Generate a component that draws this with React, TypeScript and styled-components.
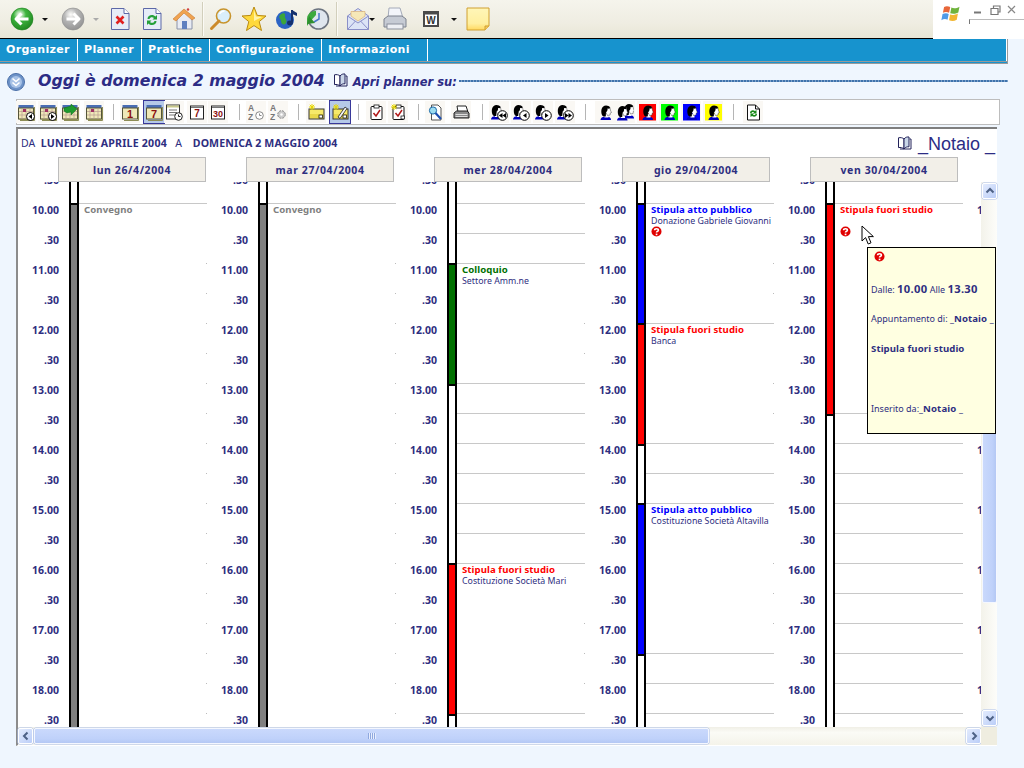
import React from 'react';
import styled, { createGlobalStyle } from 'styled-components';

const NAVY = '#2E2E80';
const UI = '"Noto Sans", "Liberation Sans", sans-serif';
const WIDE = '"DejaVu Sans", "Liberation Sans", sans-serif';

const Global = createGlobalStyle`
  html, body { margin: 0; padding: 0; background: #EFF6FE; }
  * { box-sizing: border-box; }
`;

const Root = styled.div`
  position: relative; width: 1024px; height: 768px; overflow: hidden;
  background: #EFF6FE; font-family: ${UI}; color: ${NAVY};
`;

/* ---------- browser bar ---------- */
const TopBar = styled.div`
  height: 39px; display: flex; align-items: stretch;
`;
const BrowserTools = styled.div`
  flex: 1; display: flex; align-items: center; border-bottom: 1px solid #000;
  background: linear-gradient(#F5F4EC, #EFEDE2 60%, #E8E6D6);
`;
const ToolSlot = styled.div<{ $ml: number; $w: number }>`
  margin-left: ${p => p.$ml}px; width: ${p => p.$w}px; height: 26px;
  display: flex; align-items: center; justify-content: center; flex: none;
`;
const ToolRule = styled.div`
  width: 1px; height: 34px; background: #D2CFBC; box-shadow: 1px 0 0 #FBFAF5; flex: none;
`;
const Caret = styled.div<{ $dim?: boolean }>`
  width: 0; height: 0; border: 3px solid transparent; border-bottom: 0;
  border-top: 3px solid ${p => (p.$dim ? '#AAA' : '#111')};
`;
const BrandBox = styled.div`
  width: 91px; background: #fff; position: relative; display: flex; padding: 2px 0 0 8px; gap: 8px;
`;
const WinButtons = styled.div`
  display: flex; flex-direction: column; gap: 4px; padding-top: 3px; width: 56px;
`;
const WinRow = styled.div`
  display: flex; gap: 8px; padding-left: 5px; align-items: center; height: 10px;
`;
const Slider = styled.div`
  height: 5px; border-left: 1px solid #777; border-top: 1px solid #BBB;
`;

/* ---------- menu ---------- */
const MenuBar = styled.nav`
  height: 25px; width: 1008px; display: flex; background: #1793CE;
  border-right: 1px solid #9A9A9A; border-bottom: 3px double #9A9A9A;
  box-shadow: inset -1px 0 0 #fff;
`;
const MenuItem = styled.div<{ $w: number }>`
  width: ${p => p.$w}px; border-right: 1px solid #fff; padding-left: 6px;
  color: #fff; font: bold 11px/22px ${WIDE}; letter-spacing: 0.32px; white-space: nowrap;
`;

/* ---------- title ---------- */
const TitleRow = styled.div`
  height: 35px; display: flex; align-items: center; padding: 0 16px 2px 7px; width: 1024px;
`;
const TitleBadge = styled.div`
  width: 18px; height: 18px; flex: none; margin: 2px 13px 0 0;
`;
const Title = styled.h1`
  margin: 0; font: italic bold 15.8px/22px ${WIDE}; color: #2C2C85; white-space: nowrap;
`;
const BookWrap = styled.span<{ $ml: number }>`
  margin-left: ${p => p.$ml}px; display: inline-flex; flex: none;
`;
const SubTitle = styled.span`
  margin: 2px 0 0 5px; font: italic bold 11.5px/16px ${WIDE}; color: #2C2C85; white-space: nowrap;
`;
const TitleRule = styled.div`
  flex: 1; margin: 0 0 0 2px; height: 2px; align-self: center;
  background: repeating-linear-gradient(90deg, #3F73AC 0 2px, #7FA3CB 2px 3px);
`;

/* ---------- app toolbar ---------- */
const AppTools = styled.div`
  margin-left: 16px; width: 984px; height: 26px; display: flex; align-items: center;
  background: #fff; border: 1px solid #BDBDBD;
`;
const AppCell = styled.div<{ $ml: number; $on?: boolean }>`
  margin-left: ${p => p.$ml}px; flex: none; display: flex; align-items: center; justify-content: center;
  width: ${p => (p.$on ? 22 : 20)}px; height: ${p => (p.$on ? 24 : 22)}px;
  background: ${p => (p.$on ? '#B5C9E8' : '#FAF8F4')};
  border: ${p => (p.$on ? '1px solid #38389A' : '0')};
`;
const AppRule = styled.div<{ $ml: number }>`
  margin-left: ${p => p.$ml}px; flex: none; width: 1px; height: 16px; background: #B5B5B5;
`;

/* ---------- planner panel ---------- */
const Panel = styled.section`
  margin: 2px 0 0 16px; width: 981px; height: 619px; background: #fff;
  border-top: 2px solid #7E7E7E; border-left: 2px solid #8C8C8C; border-bottom: 1px solid #fff;
  display: flex; flex-direction: column;
`;
const RangeRow = styled.div`
  height: 28px; display: flex; align-items: center; justify-content: space-between;
  padding: 0 2px 0 3px;
`;
const Range = styled.div`
  font: 10.5px/14px ${UI}; color: ${NAVY}; white-space: pre;
  b { font-weight: 700; font-size: 10.6px; letter-spacing: 0.1px; }
`;
const RangeFrom = styled.b`
  && { margin-left: 0; letter-spacing: 0.22px; }
`;
const Owner = styled.div`
  display: flex; align-items: center; gap: 6px; font: 18px/22px "Liberation Sans", sans-serif;
  color: #2C2C85; margin-top: 1px;
`;
const DayHeads = styled.div`
  height: 25px; display: flex; gap: 40px; padding-left: 40px; flex: none; overflow: hidden;
`;
const DayHead = styled.div`
  width: 148px; height: 25px; flex: none; background: #F2EFE8; border: 1px solid #BDBDBD;
  text-align: center; font: bold 10.5px/24px ${UI}; color: ${NAVY}; letter-spacing: 0.6px;
`;
const Frame = styled.div`
  flex: 1; display: grid; grid-template-columns: 963px 16px; grid-template-rows: 545px 18px;
`;
const Viewport = styled.div`
  overflow: hidden; display: flex; align-items: flex-start; width: 963px;
`;
const Day = styled.div`
  flex: none; width: 189px; margin-top: -9px; display: flex;
`;
const Hours = styled.div`
  width: 51px; flex: none; display: flex; flex-direction: column;
`;
const Hour = styled.div`
  height: 30px; padding: 0 10px 0 0; text-align: right;
  font: bold 10.5px/15px ${UI}; color: ${NAVY};
`;
const Bar = styled.div`
  width: 10px; flex: none; height: 600px; background: #fff;
  border-left: 2px solid #000; border-right: 2px solid #000;
  display: flex; flex-direction: column;
`;
const BarGap = styled.div<{ $slots: number }>`
  height: ${p => p.$slots * 30}px; flex: none;
`;
const BarFill = styled.div<{ $slots: number; $color: string }>`
  height: ${p => p.$slots * 30 + 3}px; margin-bottom: -3px; flex: none; background: ${p => p.$color};
  border-top: 2px solid #000; border-bottom: 2px solid #000; position: relative;
`;
const Slots = styled.div`
  width: 128px; flex: none; display: flex; flex-direction: column;
`;
const Slot = styled.div<{ $lined?: boolean }>`
  height: 30px; flex: none; border-top: 1px solid ${p => (p.$lined ? '#C8C8C8' : 'transparent')};
`;
const EventBlock = styled.div<{ $span: number }>`
  height: ${p => p.$span * 30}px; flex: none; border-top: 1px solid #C8C8C8; padding: 0 0 0 5px;
  background: repeating-linear-gradient(#BBB 0 1px, transparent 1px 30px) right 59px / 1px 100% no-repeat;
  overflow: hidden;
`;
const EventTitle = styled.div<{ $color: string }>`
  font: bold 9.6px/12px ${UI}; color: ${p => p.$color}; white-space: nowrap; letter-spacing: 0.08px;
`;
const EventSub = styled.div`
  font: 8.8px/11px ${UI}; color: ${NAVY}; white-space: nowrap; min-height: 11px;
`;
const AskMark = styled.div`
  height: 11px; margin-top: -1px; display: flex;
`;

/* ---------- scrollbars ---------- */
const VScroll = styled.div`
  display: flex; flex-direction: column; background: linear-gradient(90deg, #F3F2EA, #FDFDFA);
  padding: 1px 0 1px 1px;
`;
const HScroll = styled.div`
  display: flex; align-items: center; background: linear-gradient(#F0EFE6, #FBFBF6 30%, #F4F3EA);
  padding-left: 0;
`;
const ScrollCorner = styled.div`
  background: #EFEDE0;
`;
const ScrollBtn = styled.div`
  width: 15px; height: 16px; flex: none; background: linear-gradient(135deg, #E3EBFD, #BBCEF8);
  border: 1px solid #fff; border-radius: 2px; box-shadow: 0 0 0 .5px #A9BEEA;
  display: flex; align-items: center; justify-content: center;
`;
const HThumb = styled.div`
  width: 675px; height: 16px; margin-left: 1px; flex: none;
  background: linear-gradient(#CAD9FC, #BFD1FA 70%, #B4C8F4); border: 1px solid #F4F7FF; border-radius: 2px;
  box-shadow: 0 0 0 .5px #A9BEEA; display: flex; align-items: center; justify-content: center;
`;
const VTrack = styled.div`
  flex: 1; padding-top: 64px;
`;
const VThumb = styled.div`
  width: 15px; height: 340px;
  background: linear-gradient(90deg, #CAD9FC, #BFD1FA 70%, #B4C8F4); border-radius: 2px;
  border: 1px solid #F4F7FF;
`;
const Grip = styled.div`
  width: 8px; height: 6px;
  background: repeating-linear-gradient(90deg, #8FA8DE 0 1px, #E8EEFE 1px 2px);
`;
const HSpacer = styled.div`
  flex: 1;
`;

/* ---------- tooltip ---------- */
const Tip = styled.aside`
  position: absolute; left: 867px; top: 247px; width: 129px; height: 187px;
  background: #FFFFE1; border: 1px solid #000; padding: 3px 0 0 3px; overflow: hidden;
  font: 9px/15px ${UI}; color: ${NAVY}; white-space: nowrap;
`;
const TipIcon = styled.div`
  height: 11px; padding-left: 3px; display: flex; margin-bottom: 19px;
`;
const TipLine = styled.div<{ $gap?: number }>`
  height: 15px; margin-bottom: ${p => p.$gap ?? 15}px;
  b { font-size: 9.6px; letter-spacing: 0.1px; }
`;
const TipTime = styled.b`
  && { font-size: 11.2px; letter-spacing: 0.3px; }
`;
const Cursor = styled.svg`
  position: absolute; left: 861px; top: 225px;
`;

/* ---------- icons ---------- */
const Ask = () => (
  <svg width="11" height="11" viewBox="0 0 11 11">
    <circle cx="5.5" cy="5.5" r="5" fill="#E00000" />
    <path d="M3.6 4.2C3.6 2.2 7.4 2.2 7.4 4.2C7.4 5.4 5.5 5.2 5.5 6.6" fill="none" stroke="#fff" strokeWidth="1.6" />
    <rect x="4.7" y="7.6" width="1.7" height="1.6" fill="#fff" />
  </svg>
);
const Book = ({ size = 15 }: { size?: number }) => (
  <svg width={size} height={size} viewBox="0 0 15 15">
    <path d="M7 3C5.5 1.6 3.5 1.4 1.5 1.8V11.6C3.5 11.2 5.5 11.6 7 13Z" fill="#fff" stroke="#22225A" />
    <path d="M7 3C8.5 1 10.5 .8 12 1V10.8C10.5 10.6 8.5 11 7 13Z" fill="#C9D6E8" stroke="#22225A" />
    <path d="M12.5 3H14V13H3" fill="none" stroke="#22225A" />
  </svg>
);
const NavCircle = ({ color, dark, flip }: { color: string; dark: string; flip?: boolean }) => (
  <svg width="24" height="24" viewBox="0 0 24 24">
    <defs>
      <radialGradient id={`g${dark.slice(1)}`} cx=".4" cy=".3" r=".8">
        <stop offset="0" stopColor="#fff" stopOpacity=".8" />
        <stop offset=".35" stopColor={color} />
        <stop offset="1" stopColor={dark} />
      </radialGradient>
    </defs>
    <circle cx="12" cy="12" r="11" fill={`url(#g${dark.slice(1)})`} stroke={dark} strokeWidth=".6" />
    <path d={flip ? 'M5.5 12H17M12.5 6.5L18 12L12.5 17.5' : 'M18.5 12H7M11.5 6.5L6 12L11.5 17.5'} fill="none" stroke="#fff" strokeWidth="3" strokeLinejoin="round" />
  </svg>
);
const PageBase = ({ children }: { children: React.ReactNode }) => (
  <svg width="22" height="24" viewBox="0 0 22 24">
    <path d="M2.5 1.5H15L20 6.5V22.5H2.5Z" fill="#E6ECF8" stroke="#5C68A8" />
    <path d="M15 1.5V6.5H20" fill="#fff" stroke="#5C68A8" />
    {children}
  </svg>
);
const Home = () => (
  <svg width="24" height="24" viewBox="0 0 24 24">
    <path d="M5 11V22H20V11L12 4Z" fill="#E8EBF3" stroke="#8A92A8" />
    <path d="M1 12L12 2L23 11L20 13L12 6L4 14Z" fill="#F0A350" stroke="#C87830" strokeWidth=".6" />
    <rect x="10" y="14" width="5" height="8" fill="#5E7FC0" />
    <circle cx="16" cy="2.5" r="1.2" fill="#D04040" />
  </svg>
);
const Search = () => (
  <svg width="24" height="24" viewBox="0 0 24 24">
    <circle cx="14.5" cy="9" r="7" fill="#D9EEFB" stroke="#C8942C" strokeWidth="1.6" />
    <path d="M10 14L2.5 21.5" stroke="#CC8A2A" strokeWidth="3" strokeLinecap="round" />
    <path d="M10.5 7C11.5 5 13.5 4 15.5 4" stroke="#fff" strokeWidth="1.5" fill="none" />
  </svg>
);
const Star = () => (
  <svg width="26" height="26" viewBox="0 0 26 26">
    <path d="M13 1L16.3 9.4L25 10L18.2 15.6L20.5 24.5L13 19.6L5.5 24.5L7.8 15.6L1 10L9.7 9.4Z" fill="#FFD93A" stroke="#B98A12" />
    <path d="M13 4L15 10.5L21 11L13 15Z" fill="#FFF3A8" />
  </svg>
);
const Media = () => (
  <svg width="24" height="24" viewBox="0 0 24 24">
    <circle cx="10" cy="13" r="9" fill="#2B63C4" />
    <path d="M5 8C8 5 11 6 10 9C9 11 13 13 11 16C9 19 6 17 6 14C6 12 3 11 5 8Z" fill="#3BA53B" />
    <path d="M17 3V15" stroke="#14306E" strokeWidth="2" />
    <path d="M17 3L22 6V9L17 7Z" fill="#14306E" />
    <ellipse cx="15" cy="16" rx="3" ry="2.4" fill="#14306E" />
  </svg>
);
const History = () => (
  <svg width="24" height="24" viewBox="0 0 24 24">
    <circle cx="12.5" cy="12" r="10" fill="#DFE6EE" stroke="#6C7480" strokeWidth="1.6" />
    <path d="M13 6V12L8 15" stroke="#4A78C8" strokeWidth="1.5" fill="none" />
    <path d="M1 12A8 8 0 0 1 10 4L10 8L4.5 14L1 19Z" fill="#3DAA3D" />
    <path d="M3 9L9 16L1 17Z" fill="#2E8F2E" />
  </svg>
);
const Mail = () => (
  <svg width="24" height="24" viewBox="0 0 24 24">
    <path d="M1.5 9L12 1.5L22.5 9V22.5H1.5Z" fill="#DCE4F6" stroke="#8A8FC8" />
    <path d="M5 9V4.5H19V9L12 14Z" fill="#F6E8B8" stroke="#D8A868" strokeWidth=".6" />
    <path d="M1.5 9L12 16L22.5 9M1.5 22.5L9.5 14M22.5 22.5L14.5 14" fill="none" stroke="#8A8FC8" />
  </svg>
);
const Printer = () => (
  <svg width="26" height="26" viewBox="0 0 26 26">
    <path d="M7 2H18L21 12H6Z" fill="#F3F5FA" stroke="#A4AAB8" />
    <path d="M2 13L6 10H20L24 13V21H2Z" fill="#C6CBD4" stroke="#7C828E" />
    <rect x="5" y="18" width="16" height="5" fill="#EDEFF3" stroke="#8A909C" />
  </svg>
);
const WordBox = () => (
  <svg width="16" height="16" viewBox="0 0 16 16">
    <rect x="0" y="0" width="16" height="16" fill="#4A4A4A" />
    <rect x="2" y="3.5" width="12" height="10.5" fill="#fff" />
    <text x="8" y="12.5" textAnchor="middle" fontFamily="Liberation Sans" fontWeight="700" fontSize="10" fill="#333">W</text>
  </svg>
);
const Note = () => (
  <svg width="24" height="24" viewBox="0 0 24 24">
    <defs>
      <linearGradient id="noteg" x1="0" y1="0" x2="0" y2="1">
        <stop offset="0" stopColor="#FFF6B8" />
        <stop offset=".7" stopColor="#FFEFA0" />
        <stop offset="1" stopColor="#FFD860" />
      </linearGradient>
    </defs>
    <path d="M1 1H23V19L19 23H1Z" fill="url(#noteg)" stroke="#D0A030" />
    <path d="M23 19H19V23" fill="#F4C860" stroke="#D0A030" />
  </svg>
);
const WinLogo = () => (
  <svg width="26" height="24" viewBox="0 0 26 24">
    <path d="M4 3C7 1 10 2 12 3L10.5 10.5C8 9 5 9 2.5 10.5Z" fill="#E8673A" />
    <path d="M13.5 3.5C16 5 20 5 24 2.5L22.5 10C19 12 15 12 12 11Z" fill="#6FB33D" />
    <path d="M2 12C5 10.5 8 10.5 10 12L8.5 19.5C6 18 3 18.5 .5 20Z" fill="#4F9BE8" />
    <path d="M11.7 12.8C14.5 14 18 13.5 22 11.5L20.5 19.5C17 21.5 13.5 21.5 10.5 20Z" fill="#F2B632" />
  </svg>
);

/* 16px app-toolbar glyphs */
const Frame16 = ({ children }: { children: React.ReactNode }) => (
  <svg width="17" height="17" viewBox="0 0 17 17">{children}</svg>
);
const Calendar = ({ extra, plain }: { extra?: React.ReactNode; plain?: boolean }) => (
  <Frame16>
    <rect x="0.5" y="1" width="15" height="3" fill="#4A6EB4" />
    <rect x="0.5" y="4" width="15" height="11" fill="#EFE8B8" stroke="#55553A" />
    <path d="M15.5 15.5H1.5M16.5 3V16.5H2" stroke="#8D8D55" fill="none" />
    <path d="M4 4V15M8 4V15M12 4V15M1 7.5H15M1 11H15" stroke="#B89890" strokeWidth=".7" />
    {plain && <rect x="5" y="5" width="3" height="3" fill="#A03060" />}
    {extra}
  </Frame16>
);
const CalArrow = ({ flip }: { flip?: boolean }) => (
  <Calendar plain extra={<>
    <circle cx="12.5" cy="12.5" r="4" fill="#fff" stroke="#000" />
    <path d={flip ? 'M11 10L14.5 12.5L11 15Z' : 'M14 10L10.5 12.5L14 15Z'} fill="#000" />
  </>} />
);
const CalGreen = () => (
  <Calendar extra={<path d="M2 3L9 1V-1L15 4L9 10V7L5 8L2 6Z" transform="translate(0 1)" fill="#1F9A2E" stroke="#0E6B1A" strokeWidth=".5" />} />
);
const CalNum = ({ n }: { n: string }) => (
  <Frame16>
    <rect x="0.5" y="1" width="15" height="3" fill="#4A6EB4" />
    <rect x="0.5" y="4" width="15" height="11" fill="#EFE8B8" stroke="#55553A" />
    <path d="M16.5 3V16.5H2" stroke="#8D8D55" fill="none" />
    <text x="8" y="14" textAnchor="middle" fontFamily="Liberation Sans" fontWeight="700" fontSize="11" fill="#8B1010">{n}</text>
  </Frame16>
);
const ListClock = () => (
  <Frame16>
    <rect x="0.5" y="1" width="13" height="14" fill="#fff" stroke="#333" />
    <rect x="1" y="1.5" width="12" height="2" fill="#C9C98A" />
    <path d="M3 6H11M3 8.5H11M3 11H9" stroke="#777" />
    <circle cx="12.5" cy="12.5" r="3.8" fill="#fff" stroke="#222" />
    <path d="M12.5 10.5V12.5H14.5" stroke="#222" fill="none" />
  </Frame16>
);
const PageNum = ({ n, small }: { n: string; small?: boolean }) => (
  <Frame16>
    <rect x="1.5" y="2" width="13" height="13" fill="#fff" stroke="#222" />
    <path d="M2 3.5H14" stroke="#777" />
    <text x="8" y="13" textAnchor="middle" fontFamily="Liberation Sans" fontWeight="700" fontSize={small ? 9 : 10} fill="#8B1010">{n}</text>
  </Frame16>
);
const Sort = ({ kind }: { kind: 'clock' | 'gear' }) => (
  <Frame16>
    <text x="0" y="7" fontFamily="Liberation Sans" fontSize="8.5" fontWeight="700" fill="#777">A</text>
    <text x="0" y="15.5" fontFamily="Liberation Sans" fontSize="8.5" fontWeight="700" fill="#777">Z</text>
    {kind === 'clock'
      ? <><circle cx="11.5" cy="11.5" r="3.8" fill="#fff" stroke="#888" /><path d="M11.5 9.5V11.5H13.5" stroke="#888" fill="none" /></>
      : <><circle cx="11.5" cy="10.5" r="3.8" fill="#CCC" stroke="#888" strokeDasharray="2 1" /><circle cx="11.5" cy="10.5" r="1.2" fill="#fff" /></>}
  </Frame16>
);
const Spark = () => (
  <path d="M4 0V6M1 3H7M1.8 .8L6.2 5.2M6.2 .8L1.8 5.2" stroke="#E8D800" strokeWidth="1" />
);
const NoteBox = ({ pen }: { pen?: boolean }) => (
  <Frame16>
    <rect x="1" y="5" width="15" height="10" fill="#F7E96A" stroke="#333" />
    <rect x="2" y="10" width="13" height="4" fill="#EAD84A" />
    <rect x="11" y="11" width="3.5" height="3" fill="#fff" stroke="#000" strokeWidth=".7" />
    <Spark />
    {pen && <path d="M6 13L13 3L15 4.5L8 14.5Z" fill="#F2F2F2" stroke="#222" strokeWidth=".8" />}
  </Frame16>
);
const Clip = ({ spark }: { spark?: boolean }) => (
  <Frame16>
    <rect x="3" y="2.5" width="11" height="13" rx="1" fill="#fff" stroke="#111" />
    <rect x="6" y="1" width="5" height="3" fill="#fff" stroke="#111" strokeWidth=".8" />
    <path d="M5.5 9L8 12L12 6" stroke="#B01818" strokeWidth="1.5" fill="none" />
    {spark && <Spark />}
    {spark && <rect x="11" y="12" width="3.5" height="3" fill="#fff" stroke="#000" strokeWidth=".7" />}
  </Frame16>
);
const Lens = () => (
  <Frame16>
    <path d="M4.5 1H11L14 4V16H4.5Z" fill="#fff" stroke="#555" />
    <circle cx="6" cy="6.5" r="3.6" fill="#9CDCF0" stroke="#1C6AA8" />
    <path d="M8.5 9L14 15" stroke="#1C4FB0" strokeWidth="2.2" />
  </Frame16>
);
const SmallPrinter = () => (
  <Frame16>
    <path d="M4 2H13L15 8H5Z" fill="#fff" stroke="#222" />
    <path d="M1 9L3.5 7H14L16 9V14H1Z" fill="#8A8A8A" stroke="#222" />
    <path d="M2.5 10.5H14.5M2.5 12.5H14.5" stroke="#ddd" />
  </Frame16>
);
const Head = ({ dx = 0 }: { dx?: number }) => (
  <g transform={`translate(${dx} 0)`}>
    <path d="M1 15.5C1 13 3.5 12 7 12C10 12 11.5 13.5 11.5 15.5Z" fill="#0000C0" />
    <path d="M4.5 9.5H9V13H5Z" fill="#fff" />
    <path d="M7 2.5H10.2L11.2 6.5L12 8L10.8 8.4L10.6 10.5L8 11L6.5 8Z" fill="#fff" stroke="#111" strokeWidth=".4" />
    <path d="M10.6 3.5C9.5 .8 5.5 .4 3.5 2.2C1.4 4.1 1.5 8 2.5 10.5C3.2 12 5 12.5 6.3 11.8L6.5 7.5C7.8 7 8.3 5 8 4C9 4.3 10 4.2 10.6 3.5Z" fill="#000" />
  </g>
);
const Person = ({ bg }: { bg?: string }) => (
  <Frame16>
    {bg && <rect x="0" y="0" width="17" height="16.5" fill={bg} />}
    <g transform="translate(2.5 .5)"><Head /></g>
  </Frame16>
);
const Twin = () => (
  <svg width="18" height="17" viewBox="0 0 18 17">
    <g transform="translate(6.5 -1)"><Head /></g>
    <g transform="translate(0 1)"><Head /></g>
  </svg>
);
const PersonNav = ({ glyph }: { glyph: string }) => (
  <Frame16>
    <g transform="translate(-1 0)"><Head /></g>
    <circle cx="11.5" cy="11.5" r="4.8" fill="#fff" stroke="#000" />
    <path d={glyph} fill="#000" />
  </Frame16>
);
const DocRefresh = () => (
  <Frame16>
    <path d="M2.5 1H10.5L14.5 5V16H2.5Z" fill="#fff" stroke="#111" />
    <path d="M10.5 1V5H14.5" fill="none" stroke="#111" />
    <path d="M5 9C5 6.5 8 5.5 10 7L11.5 6V9.5H8L9 8.2C8 7.5 6.5 8 6.3 9.5Z" fill="#1A8A1A" />
    <path d="M12 10C12 12.5 9 13.5 7 12L5.5 13V9.5H9L8 10.8C9 11.5 10.5 11 10.7 9.5Z" fill="#1A8A1A" />
  </Frame16>
);
const Chevron = ({ dir }: { dir: 'up' | 'down' | 'left' | 'right' }) => {
  const d = { up: 'M1.5 6.5L5 3L8.5 6.5', down: 'M1.5 3.5L5 7L8.5 3.5', left: 'M6.5 1.5L3 5L6.5 8.5', right: 'M3.5 1.5L7 5L3.5 8.5' }[dir];
  return <svg width="10" height="10" viewBox="0 0 10 10"><path d={d} fill="none" stroke="#4D6185" strokeWidth="2" /></svg>;
};

/* ---------- data ---------- */
type ToolSpec = { c: number; w: number; node: React.ReactNode } | { c: number; rule: true };

const browserTools: ToolSpec[] = [
  { c: 22, w: 24, node: <NavCircle color="#3FB53F" dark="#1B7F1B" /> },
  { c: 45, w: 8, node: <Caret /> },
  { c: 73, w: 24, node: <NavCircle color="#B9B9B9" dark="#8C8C8C" flip /> },
  { c: 96, w: 8, node: <Caret $dim /> },
  { c: 120, w: 22, node: <PageBase><path d="M7.5 9.5L14.5 16.5M14.5 9.5L7.5 16.5" stroke="#E02020" strokeWidth="2.6" /></PageBase> },
  { c: 152, w: 22, node: <PageBase><path d="M6.5 12C6.5 8 12 6.5 14.5 9.5L16 8V12.5H11.5L13 11C11.5 9.5 9 10 8.5 12Z" fill="#25A03A" /><path d="M15.5 14C15.5 18 10 19.5 7.5 16.5L6 18V13.5H10.5L9 15C10.5 16.5 13 16 13.5 14Z" fill="#25A03A" /></PageBase> },
  { c: 184, w: 24, node: <Home /> },
  { c: 202, rule: true },
  { c: 221, w: 24, node: <Search /> },
  { c: 254, w: 26, node: <Star /> },
  { c: 287, w: 24, node: <Media /> },
  { c: 318, w: 24, node: <History /> },
  { c: 336, rule: true },
  { c: 358, w: 24, node: <Mail /> },
  { c: 372, w: 8, node: <Caret /> },
  { c: 395, w: 26, node: <Printer /> },
  { c: 431, w: 16, node: <WordBox /> },
  { c: 454, w: 8, node: <Caret /> },
  { c: 478, w: 24, node: <Note /> },
];

const NAV1 = 'M11.5 9L7.8 11.5L11.5 14Z M15 9L11.5 11.5L15 14Z';
const NAV2 = 'M13.5 9L10 11.5L13.5 14Z';
const NAV3 = 'M10 9L13.5 11.5L10 14Z';
const NAV4 = 'M8 9L11.5 11.5L8 14Z M11.5 9L15 11.5L11.5 14Z';

type AppSpec = { c: number; node?: React.ReactNode; on?: boolean };
const appTools: AppSpec[] = [
  { c: 26, node: <CalArrow /> },
  { c: 48, node: <CalArrow flip /> },
  { c: 70, node: <CalGreen /> },
  { c: 94, node: <Calendar plain /> },
  { c: 113 },
  { c: 130, node: <CalNum n="1" /> },
  { c: 154, node: <CalNum n="7" />, on: true },
  { c: 174, node: <ListClock /> },
  { c: 197, node: <PageNum n="7" /> },
  { c: 218, node: <PageNum n="30" small /> },
  { c: 239 },
  { c: 256, node: <Sort kind="clock" /> },
  { c: 278, node: <Sort kind="gear" /> },
  { c: 298 },
  { c: 316, node: <NoteBox /> },
  { c: 340, node: <NoteBox pen />, on: true },
  { c: 358 },
  { c: 376, node: <Clip /> },
  { c: 398, node: <Clip spark /> },
  { c: 418 },
  { c: 435, node: <Lens /> },
  { c: 461, node: <SmallPrinter /> },
  { c: 482 },
  { c: 499, node: <PersonNav glyph={NAV1} /> },
  { c: 521, node: <PersonNav glyph={NAV2} /> },
  { c: 543, node: <PersonNav glyph={NAV3} /> },
  { c: 565, node: <PersonNav glyph={NAV4} /> },
  { c: 585 },
  { c: 605, node: <Person /> },
  { c: 625, node: <Twin /> },
  { c: 647, node: <Person bg="#FF0000" /> },
  { c: 669, node: <Person bg="#00FF00" /> },
  { c: 691, node: <Person bg="#0000FF" /> },
  { c: 713, node: <Person bg="#FFFF00" /> },
  { c: 733 },
  { c: 753, node: <DocRefresh /> },
];

const GREY = '#808080', GREEN = '#007000', RED = '#FF0000', BLUE = '#0000FF';
type Ev = { at: number; span: number; color: string; text?: string; title: string; sub?: string; ask?: boolean };

const ROWS = 20;
const hourLabel = (i: number) => (i % 2 === 0 ? '.30' : `${10 + (i - 1) / 2}.00`);

const days: { head?: string; lineFrom: number; events: Ev[] }[] = [
  { head: 'lun 26/4/2004', lineFrom: 1, events: [{ at: 1, span: 19, color: GREY, text: '#808080', title: 'Convegno' }] },
  { head: 'mar 27/04/2004', lineFrom: 1, events: [{ at: 1, span: 19, color: GREY, text: '#808080', title: 'Convegno' }] },
  {
    head: 'mer 28/04/2004', lineFrom: 1, events: [
      { at: 3, span: 4, color: GREEN, title: 'Colloquio', sub: 'Settore Amm.ne' },
      { at: 13, span: 5, color: RED, title: 'Stipula fuori studio', sub: 'Costituzione Società Mari' },
    ],
  },
  {
    head: 'gio 29/04/2004', lineFrom: 1, events: [
      { at: 1, span: 4, color: BLUE, title: 'Stipula atto pubblico', sub: 'Donazione Gabriele Giovanni', ask: true },
      { at: 5, span: 4, color: RED, title: 'Stipula fuori studio', sub: 'Banca' },
      { at: 11, span: 5, color: BLUE, title: 'Stipula atto pubblico', sub: 'Costituzione Società Altavilla' },
    ],
  },
  {
    head: 'ven 30/04/2004', lineFrom: 1, events: [
      { at: 1, span: 7, color: RED, title: 'Stipula fuori studio', ask: true },
    ],
  },
  { lineFrom: 1, events: [] },
];

function DayColumn({ events, lineFrom }: { events: Ev[]; lineFrom: number }) {
  const bar: React.ReactNode[] = [];
  const slots: React.ReactNode[] = [];
  let i = 0;
  while (i < ROWS) {
    const ev = events.find(e => e.at === i);
    if (ev) {
      bar.push(<BarFill key={i} $slots={ev.span} $color={ev.color} />);
      slots.push(
        <EventBlock key={i} $span={ev.span}>
          <EventTitle $color={ev.text ?? ev.color}>{ev.title}</EventTitle>
          {(ev.sub || ev.ask) && <EventSub>{ev.sub}</EventSub>}
          {ev.ask && <AskMark><Ask /></AskMark>}
        </EventBlock>,
      );
      i += ev.span;
    } else {
      bar.push(<BarGap key={i} $slots={1} />);
      slots.push(<Slot key={i} $lined={i >= lineFrom} />);
      i += 1;
    }
  }
  return (
    <Day>
      <Hours>
        {Array.from({ length: ROWS }, (_, r) => <Hour key={r}>{hourLabel(r)}</Hour>)}
      </Hours>
      <Bar>{bar}</Bar>
      <Slots>{slots}</Slots>
    </Day>
  );
}

function placed<T extends { c: number }>(items: T[], widthOf: (t: T) => number, origin: number) {
  let edge = origin;
  return items.map(item => {
    const w = widthOf(item);
    const left = item.c - w / 2;
    const ml = left - edge;
    edge = left + w;
    return { item, ml };
  });
}

export default function App() {
  const top = placed(browserTools, t => ('rule' in t ? 1 : t.w), 0);
  const app = placed(appTools, t => (t.node ? (t.on ? 22 : 20) : 1), 17);
  return (
    <Root>
      <Global />
      <TopBar>
        <BrowserTools>
          {top.map(({ item, ml }) =>
            'rule' in item
              ? <React.Fragment key={item.c}><ToolSlot $ml={ml} $w={1}><ToolRule /></ToolSlot></React.Fragment>
              : <ToolSlot key={item.c} $ml={ml} $w={item.w}>{item.node}</ToolSlot>,
          )}
        </BrowserTools>
        <BrandBox>
          <WinLogo />
          <WinButtons>
            <WinRow>
              <svg width="50" height="10" viewBox="0 0 50 10">
                <path d="M0 7.5H7" stroke="#777" strokeWidth="2" />
                <path d="M17 3.5H24V9.5H17ZM19.5 3.5V1H26V7H24" fill="none" stroke="#777" strokeWidth="1.2" />
                <path d="M34 1L41 8M41 1L34 8" stroke="#888" strokeWidth="1.2" />
              </svg>
            </WinRow>
            <Slider />
          </WinButtons>
        </BrandBox>
      </TopBar>

      <MenuBar>
        <MenuItem $w={78}>Organizer</MenuItem>
        <MenuItem $w={64}>Planner</MenuItem>
        <MenuItem $w={68}>Pratiche</MenuItem>
        <MenuItem $w={112}>Configurazione</MenuItem>
        <MenuItem $w={106}>Informazioni</MenuItem>
      </MenuBar>

      <TitleRow>
        <TitleBadge>
          <svg width="18" height="18" viewBox="0 0 18 18">
            <circle cx="9" cy="9" r="8.5" fill="#6E93C8" stroke="#4A6FA8" />
            <circle cx="9" cy="9" r="6" fill="#A8C2E6" />
            <path d="M5.5 5.5L9 8.5L12.5 5.5M5.5 9.5L9 12.5L12.5 9.5" fill="none" stroke="#fff" strokeWidth="1.6" />
          </svg>
        </TitleBadge>
        <Title>Oggi è domenica 2 maggio 2004</Title>
        <BookWrap $ml={8}><Book /></BookWrap>
        <SubTitle>Apri planner su:</SubTitle>
        <TitleRule />
      </TitleRow>

      <AppTools>
        {app.map(({ item, ml }) =>
          item.node
            ? <AppCell key={item.c} $ml={ml} $on={item.on}>{item.node}</AppCell>
            : <AppRule key={item.c} $ml={ml} />,
        )}
      </AppTools>

      <Panel>
        <RangeRow>
          <Range>DA  <RangeFrom>LUNEDÌ 26 APRILE 2004</RangeFrom>   A    <b>DOMENICA 2 MAGGIO 2004</b></Range>
          <Owner><Book />_Notaio _</Owner>
        </RangeRow>
        <DayHeads>
          {days.filter(d => d.head).map(d => <DayHead key={d.head}>{d.head}</DayHead>)}
        </DayHeads>
        <Frame>
          <Viewport>
            {days.map((d, i) => <DayColumn key={i} events={d.events} lineFrom={d.lineFrom} />)}
          </Viewport>
          <VScroll>
            <ScrollBtn><Chevron dir="up" /></ScrollBtn>
            <VTrack><VThumb /></VTrack>
            <ScrollBtn><Chevron dir="down" /></ScrollBtn>
          </VScroll>
          <HScroll>
            <ScrollBtn><Chevron dir="left" /></ScrollBtn>
            <HThumb><Grip /></HThumb>
            <HSpacer />
            <ScrollBtn><Chevron dir="right" /></ScrollBtn>
          </HScroll>
          <ScrollCorner />
        </Frame>
      </Panel>

      <Tip>
        <TipIcon><Ask /></TipIcon>
        <TipLine>Dalle: <TipTime>10.00</TipTime> Alle <TipTime>13.30</TipTime></TipLine>
        <TipLine>Appuntamento di: <b>_Notaio _</b></TipLine>
        <TipLine $gap={45}><b>Stipula fuori studio</b></TipLine>
        <TipLine>Inserito da:<b>_Notaio _</b></TipLine>
      </Tip>
      <Cursor width="14" height="21" viewBox="0 0 14 21">
        <path d="M1 1V16L4.6 12.6L7.2 19L10 17.8L7.4 11.6H12.4Z" fill="#fff" stroke="#000" />
      </Cursor>
    </Root>
  );
}
